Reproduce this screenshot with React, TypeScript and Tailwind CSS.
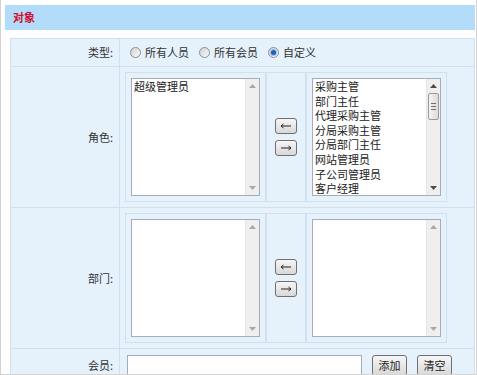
import React from "react";

function Radio({ checked }: { checked?: boolean }) {
  return (
    <span className="inline-flex w-[11px] h-[11px] rounded-full border border-[#8c8f93] bg-linear-to-br from-[#cfd1d3] to-[#fbfbfb] items-center justify-center shrink-0">
      {checked && <span className="w-[5px] h-[5px] rounded-full bg-[#1e63b8] ring-1 ring-[#9cc3ea]" />}
    </span>
  );
}

function Tri({ down, color }: { down?: boolean; color: string }) {
  return (
    <svg width="7" height="4" viewBox="0 0 7 4">
      {down ? <path d="M0 0 L7 0 L3.5 4Z" fill={color} /> : <path d="M0 4 L3.5 0 L7 4Z" fill={color} />}
    </svg>
  );
}

function ScrollBar({ thumb }: { thumb?: boolean }) {
  const c = thumb ? "#4d4d4d" : "#a8a8a8";
  return (
    <div className="flex flex-col w-[14px] h-full bg-[#efefef] border-l border-[#e6e6e6]">
      <div className="h-[14px] flex items-center justify-center">
        <Tri color={c} />
      </div>
      <div className="flex-1 flex flex-col">
        {thumb && (
          <div className="h-[27px] mx-[1px] rounded-[2px] border border-[#9a9a9a] bg-linear-to-r from-[#f4f4f4] to-[#dcdcdc] flex flex-col items-center justify-center gap-[2px]">
            <div className="w-[5px] h-px bg-[#707070]" />
            <div className="w-[5px] h-px bg-[#707070]" />
            <div className="w-[5px] h-px bg-[#707070]" />
          </div>
        )}
      </div>
      <div className="h-[14px] flex items-center justify-center">
        <Tri down color={c} />
      </div>
    </div>
  );
}

function ListBox({ items, thumb }: { items: string[]; thumb?: boolean }) {
  return (
    <div className="w-[129px] h-[118px] border border-[#a6adb6] bg-white flex overflow-hidden">
      <div className="flex-1 pl-[2px] text-[11px] leading-[14.6px] text-[#222] overflow-hidden">
        {items.map((t) => (
          <div key={t} className="whitespace-nowrap">{t}</div>
        ))}
      </div>
      <ScrollBar thumb={thumb} />
    </div>
  );
}

function ArrowBtn({ left }: { left?: boolean }) {
  return (
    <div className="w-[22px] h-[16px] rounded-[3px] border border-[#707070] bg-linear-to-b from-[#f6f6f6] to-[#d8d8d8] flex items-center justify-center">
      <svg width="12" height="6" viewBox="0 0 12 6">
        {left ? (
          <path d="M1 3 H11 M1 3 L3.5 1 M1 3 L3.5 5" stroke="#222" strokeWidth="1" fill="none" />
        ) : (
          <path d="M1 3 H11 M11 3 L8.5 1 M11 3 L8.5 5" stroke="#222" strokeWidth="1" fill="none" />
        )}
      </svg>
    </div>
  );
}

function Transfer({ left, right, thumb }: { left: string[]; right: string[]; thumb?: boolean }) {
  return (
    <div className="flex">
      <div className="w-[141px] h-[130px] border border-[#d2e0ed] p-[5px]">
        <ListBox items={left} />
      </div>
      <div className="w-[40px] h-[130px] border border-[#d2e0ed] flex flex-col items-center justify-center gap-[6px]">
        <ArrowBtn left />
        <ArrowBtn />
      </div>
      <div className="w-[141px] h-[130px] border border-[#d2e0ed] p-[5px]">
        <ListBox items={right} thumb={thumb} />
      </div>
    </div>
  );
}

function Btn({ children }: { children: React.ReactNode }) {
  return (
    <div className="w-[35px] h-[21px] rounded-[3px] border border-[#707070] bg-linear-to-b from-[#f6f6f6] to-[#d9d9d9] flex items-center justify-center text-[11px] text-[#222]">
      {children}
    </div>
  );
}

export default function App() {
  const roles = ["采购主管", "部门主任", "代理采购主管", "分局采购主管", "分局部门主任", "网站管理员", "子公司管理员", "客户经理"];
  return (
    <div className="w-[477px] h-[375px] bg-white border-l border-r border-b border-[#d3d3d3] overflow-hidden font-['Noto_Sans_CJK_SC','Noto_Sans',sans-serif] text-[11px] text-[#333]">
      <div className="ml-[4px] mr-px mt-[5px] h-[25px] bg-[#b3dcfa] flex items-center pl-[8px]">
        <span className="font-bold text-[#d0102f] text-[11px]">对象</span>
      </div>
      <div className="ml-[9px] mr-px mt-[8px] border-l border-r border-[#d2e0ed] bg-[#e5f1fb]">
        {/* row 1 */}
        <div className="flex h-[28px] border-t border-[#d2e0ed]">
          <div className="w-[109px] border-r border-[#d2e0ed] flex items-center justify-end pr-[6px]">类型:</div>
          <div className="flex-1 flex items-center pl-[10px] gap-[4px]">
            <Radio />
            <span className="mr-[6px]">所有人员</span>
            <Radio />
            <span className="mr-[6px]">所有会员</span>
            <Radio checked />
            <span>自定义</span>
          </div>
        </div>
        {/* row 2 */}
        <div className="flex h-[141px] border-t border-[#d2e0ed]">
          <div className="w-[109px] border-r border-[#d2e0ed] flex items-center justify-end pr-[6px]">角色:</div>
          <div className="flex-1 pl-[5px] pt-[5px]">
            <Transfer left={["超级管理员"]} right={roles} thumb />
          </div>
        </div>
        {/* row 3 */}
        <div className="flex h-[141px] border-t border-[#d2e0ed]">
          <div className="w-[109px] border-r border-[#d2e0ed] flex items-center justify-end pr-[6px]">部门:</div>
          <div className="flex-1 pl-[5px] pt-[5px]">
            <Transfer left={[]} right={[]} />
          </div>
        </div>
        {/* row 4 */}
        <div className="flex h-[40px] border-t border-[#d2e0ed]">
          <div className="w-[109px] border-r border-[#d2e0ed] flex items-start justify-end pr-[6px] pt-[8px]">会员:</div>
          <div className="flex-1 flex items-start pl-[7px] pt-[6px] gap-[10px]">
            <div className="w-[235px] h-[21px] border border-[#a6adb6] bg-white" />
            <Btn>添加</Btn>
            <Btn>清空</Btn>
          </div>
        </div>
      </div>
    </div>
  );
}
